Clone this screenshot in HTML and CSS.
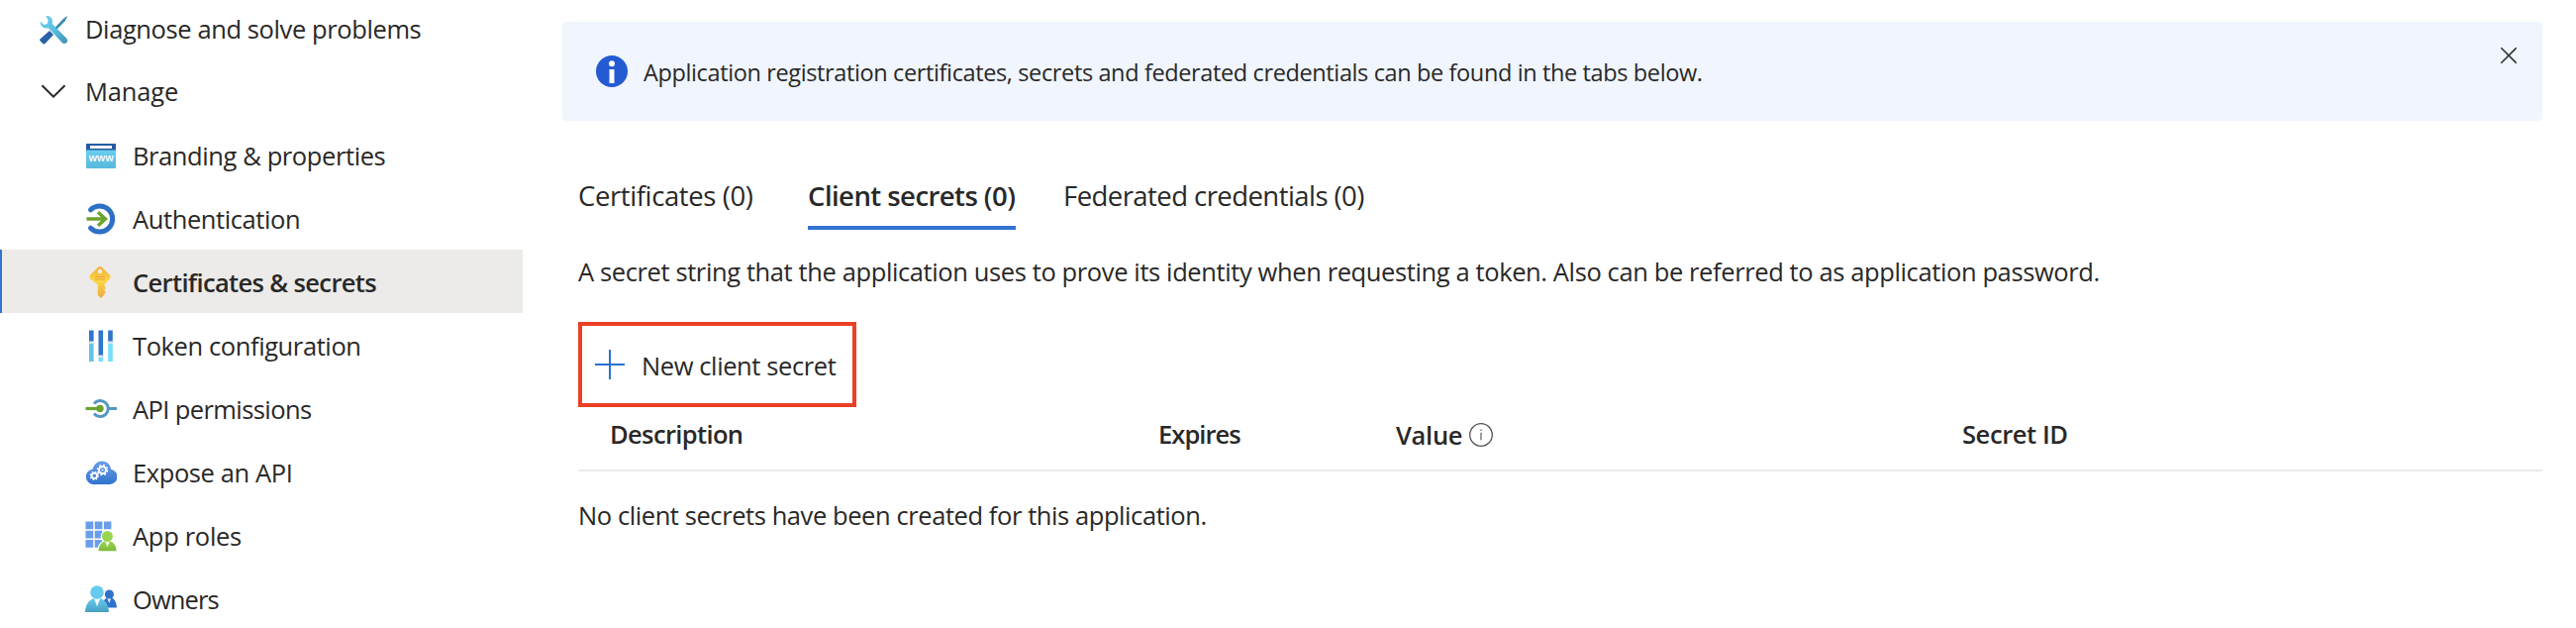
FILE: index.html
```html
<!DOCTYPE html>
<html lang="en">
<head>
<meta charset="utf-8">
<title>Certificates &amp; secrets</title>
<link rel="stylesheet" href="styles.css">
</head>
<body>
<div class="page">
  <nav class="sidebar">
    <a class="item item-top">
      <svg class="icon" viewBox="0 0 32 32">
        <defs>
          <linearGradient id="wrench" x1="0" y1="0" x2="1" y2="1"><stop offset="0" stop-color="#6fd0f2"/><stop offset=".5" stop-color="#5cbfe2"/><stop offset="1" stop-color="#4191b4"/></linearGradient>
        </defs>
        <path d="M29.600 2.200l.4.6-2.300 4.400-9.400 9.600-1.800-1.800 9.200-9.800z" fill="#3d87ad"/>
        <path d="M12 17l4 4-8.200 8.800a2 2 0 0 1-2.600.1l-2.600-2.600a1.500 1.500 0 0 1 .1-2z" fill="#2a62a8"/>
        <path d="M8.300 2.200c3.600-.7 7.200 2 6.600 6.200l-.1 1.600L29.300 24.800c1.300 1.500 1 3.500-.1 4.500-1.300 1.200-3.200 1-4.300-.1L10.800 14.200c-4.500 1.300-8.400-1.800-8.300-6.600l3.900 3.300 3.300-1 1-3.700z" fill="url(#wrench)"/>
      </svg>
      <span class="label diagnose">Diagnose and solve problems</span>
    </a>
    <a class="item item-group">
      <svg class="icon" viewBox="0 0 32 32"><path d="M4.500 10.200L16 21.600 27.500 10.200" fill="none" stroke="#292827" stroke-width="2"/></svg>
      <span class="label manage">Manage</span>
    </a>
    <a class="item sub">
      <svg class="icon" viewBox="0 0 32 32">
        <defs><linearGradient id="site" x1="0" y1="0" x2="0" y2="1"><stop offset="0" stop-color="#6fd5f6"/><stop offset="1" stop-color="#58b9dc"/></linearGradient></defs>
        <rect x="1" y="4" width="30" height="25" rx="1" fill="url(#site)"/>
        <path d="M1 10.500V5a1 1 0 0 1 1-1h28a1 1 0 0 1 1 1v5.500z" fill="#245ba3"/>
        <rect x="5" y="6" width="22" height="3" fill="#f2f2f2"/>
        <text class="www" x="16" y="22" text-anchor="middle">www</text>
      </svg>
      <span class="label">Branding &amp; properties</span>
    </a>
    <a class="item sub">
      <svg class="icon" viewBox="0 0 32 32">
        <path d="M5.500 6.800A13 13 0 1 1 5.500 25.200" fill="none" stroke="#2d70c4" stroke-width="5" stroke-linecap="round"/>
        <path d="M1.500 16H20M13 9.300L20.500 16l-7.500 6.700" fill="none" stroke="#6ba32f" stroke-width="3.400"/>
      </svg>
      <span class="label">Authentication</span>
    </a>
    <a class="item sub selected">
      <svg class="icon" viewBox="0 0 32 32">
        <defs><linearGradient id="key" x1="0" y1="0" x2="0" y2="1"><stop offset="0" stop-color="#f2b03c"/><stop offset=".45" stop-color="#fbd548"/><stop offset="1" stop-color="#efa93b"/></linearGradient></defs>
        <path d="M12.800 1q2.200-2 4.400 0l7.600 7.600q1.600 2 0 4L19.500 18v2l1 1v1.500l-1.300 1.300 1.300 1.300v1.400l-1.300 1.200v1l-3.200 3.300-3.200-3V18.500L5.200 12.600q-1.600-2 0-4z" fill="url(#key)"/>
        <circle cx="15" cy="4.900" r="2.200" fill="#f0eeea"/>
        <path d="M10 10.500h10M10 13h10" stroke="#eaa23a" stroke-width="1.200"/>
      </svg>
      <span class="label">Certificates &amp; secrets</span>
    </a>
    <a class="item sub">
      <svg class="icon" viewBox="0 0 32 32">
        <path d="M4 .5h4.600V12H4zM13.500.5h4.600V26h-4.600zM23.200.5h4.600V12h-4.600z" fill="#2f74cf"/>
        <path d="M4 13.500h4.600V32H4z" fill="#65c3e0"/><path d="M13.500 27.500h4.600V32h-4.600zM23.200 13.500h4.600V32h-4.600z" fill="#76def9"/>
        <path d="M3.200 11.500h6.200v2H3.200zM12.700 25.500h6.200v2h-6.200zM22.400 11.500h6.200v2h-6.200z" fill="#dfe3e8"/>
      </svg>
      <span class="label">Token configuration</span>
    </a>
    <a class="item sub">
      <svg class="icon" viewBox="0 0 32 32">
        <path d="M9 10.500A8 8 0 1 1 9 20.500M23 15.500h9" fill="none" stroke="#5597c4" stroke-width="3"/>
        <path d="M.5 15.500H15" stroke="#6ba32f" stroke-width="3.200"/><circle cx="15" cy="15.500" r="3.700" fill="#6ba32f"/>
      </svg>
      <span class="label permissions">API permissions</span>
    </a>
    <a class="item sub">
      <svg class="icon" viewBox="0 0 32 32">
        <defs><linearGradient id="cloud" x1="0" y1="0" x2="0" y2="1"><stop offset="0" stop-color="#6a9fe8"/><stop offset="1" stop-color="#3273cf"/></linearGradient></defs>
        <path d="M7.800 28A7.700 7.700 0 0 1 7.500 12.700C9 7.600 12.800 4.500 17 4.500c5 0 8.600 3.600 9 8.200A7.700 7.700 0 0 1 25 28z" fill="url(#cloud)"/>
        <g fill="none" stroke="#fff"><circle cx="17.500" cy="13.500" r="3.500" stroke-width="2"/><circle cx="17.500" cy="13.500" r="5" stroke-width="1.600" stroke-dasharray="1.960 1.960"/><circle cx="9.300" cy="19.300" r="2.700" stroke-width="1.800"/><circle cx="9.300" cy="19.300" r="4" stroke-width="1.400" stroke-dasharray="1.570 1.570"/></g>
        <circle cx="17.500" cy="13.500" r="1" fill="#fff"/>
      </svg>
      <span class="label">Expose an API</span>
    </a>
    <a class="item sub">
      <svg class="icon" viewBox="0 0 32 32">
        <defs><linearGradient id="role" x1="0" y1="0" x2="0" y2="1"><stop offset="0" stop-color="#9bd84e"/><stop offset="1" stop-color="#7fb83c"/></linearGradient></defs>
        <path d="M.5 1.500h7.700v7.700H.5zM9.700 1.500h7.700v7.700H9.700zM18.900 1.500h7.500v7.700h-7.500zM.5 10.700h7.700v7.700H.5zM9.700 10.700h7.700v7.700H9.700zM.5 20h7.700v7.700H.5zM9.700 20h7.700v7.700H9.700z" fill="#6a9dea"/>
        <path d="M12.200 32c.2-5 1.800-9 5.200-10.600a6.800 6.800 0 1 1 10 0C30.500 23 32 27 32 32z" fill="#fff"/>
        <path d="M13.500 31.200c.3-5.500 3-10.200 9-10.200s8.800 4.700 9.200 10.200z" fill="url(#role)"/>
        <path d="M19.800 20.800l2.700 6.700 2.700-6.700z" fill="#f1f5e8"/><circle cx="22.400" cy="16.400" r="5.500" fill="#99d64f"/>
      </svg>
      <span class="label roles">App roles</span>
    </a>
    <a class="item sub">
      <svg class="icon" viewBox="0 0 32 32">
        <defs><linearGradient id="owner" x1="0" y1="0" x2="0" y2="1"><stop offset="0" stop-color="#68cdef"/><stop offset="1" stop-color="#479fc2"/></linearGradient></defs>
        <path d="M17 24.500c.4-6 2.800-10.500 7.500-10.500s7 4.500 7.500 10.500z" fill="#2f72cc"/><path d="M22 14l2.300 6 2.300-6z" fill="#e6f0fa"/><circle cx="24.400" cy="11" r="4.600" fill="#2f72cc"/>
        <path d="M0 29c.3-8 4.300-14.200 12-14.200S23.500 21 24 29z" fill="url(#owner)"/><path d="M8.600 14l3.500 9.500L15.600 14z" fill="#eef8fc"/><circle cx="12" cy="9" r="6.800" fill="#66cbed"/>
      </svg>
      <span class="label owners">Owners</span>
    </a>
  </nav>
  <main class="content">
    <section class="banner">
      <svg class="banner-icon" viewBox="0 0 32 32"><circle cx="16" cy="16" r="16" fill="#245bd2"/><circle cx="16" cy="8.200" r="3" fill="#fff"/><path d="M13.500 14h5v14h-5z" fill="#fff"/></svg>
      <span>Application registration certificates, secrets and federated credentials can be found in the tabs below.</span>
      <svg class="close" viewBox="0 0 18 18"><path d="M1.300 1.300l15.400 15.400M16.700 1.300L1.300 16.700" stroke="#323130" stroke-width="1.600"/></svg>
    </section>
    <div class="tabs">
      <a class="tab certs">Certificates (0)</a>
      <a class="tab active">Client secrets (0)</a>
      <a class="tab federated">Federated credentials (0)</a>
    </div>
    <p class="intro">A secret string that the application uses to prove its identity when requesting a token. Also can be referred to as application password.</p>
    <button class="new">
      <svg class="plus" viewBox="0 0 30 30"><path d="M15 0v30M0 15h30" stroke="#2b72cf" stroke-width="2"/></svg>
      <span class="new-label">New client secret</span>
    </button>
    <div class="head">
      <span class="description">Description</span>
      <span class="expires">Expires</span>
      <span class="value">Value<svg class="info" viewBox="0 0 24 24"><circle cx="12" cy="12" r="11.300" fill="none" stroke="#555" stroke-width="1.300"/><path d="M12 9.800v7.400M12 6.500v1.600" stroke="#6a6a6a" stroke-width="1.300"/></svg></span>
      <span>Secret ID</span>
    </div>
    <p class="empty">No client secrets have been created for this application.</p>
  </main>
</div>
</body>
</html>
```
FILE: styles.css
```css
* { box-sizing: border-box; }
body {
  margin: 0;
  background: #fff;
  color: #292827;
  font-family: "Open Sans", "Noto Sans", sans-serif;
  font-size: 25.5px;
  letter-spacing: -0.4px;
  white-space: nowrap;
  overflow: hidden;
}
.page { display: flex; width: 2602px; height: 634px; overflow: hidden; }

.sidebar { width: 528px; flex: none; }
.item { display: flex; align-items: center; height: 64px; line-height: 60px; padding: 2px 0 0 38px; gap: 16px; }
.item-top { height: 60px; padding-top: 0; }
.item-group { padding-top: 0; }
.sub { padding-left: 86px; }
.icon { width: 32px; height: 32px; flex: none; }
.www { fill: #fff; font-size: 10.5px; font-weight: 600; letter-spacing: -0.2px; }
.selected { background: #ecebe9; box-shadow: inset 2px 0 #3374d0; font-weight: 600; letter-spacing: -0.64px; }
.diagnose { margin-top: -2px; }
.manage { letter-spacing: -0.16px; }
.permissions { letter-spacing: -0.6px; }
.roles { letter-spacing: -0.3px; }
.owners { letter-spacing: -0.9px; }

.content { flex: none; width: 2000px; margin-left: 40px; padding-top: 22px; }
.banner { display: flex; height: 100px; padding: 34px 25px 0 34px; border-radius: 4px; background: #f0f5fe; font-size: 23.5px; line-height: 34px; letter-spacing: -0.375px; }
.banner-icon { width: 32px; height: 32px; margin-right: 16px; flex: none; }
.close { width: 18px; height: 18px; margin: -9px 0 0 auto; flex: none; }
.tabs { display: flex; height: 110px; padding: 58px 0 0 16px; font-size: 27.5px; }
.tab { height: 52px; line-height: 35px; }
.certs { width: 176px; margin-right: 56px; }
.active { width: 210px; border-bottom: 4px solid #3374d0; font-weight: 600; letter-spacing: -0.55px; }
.federated { margin-left: 48px; letter-spacing: -0.56px; }
.intro { margin: 24px 0 0 16px; height: 69px; line-height: 36px; letter-spacing: -0.388px; }
.new { display: flex; align-items: center; width: 281px; height: 86px; margin-left: 16px; padding: 0 0 0 13px; gap: 17px; border: 4px solid #eb4025; background: none; color: inherit; font: inherit; letter-spacing: inherit; }
.plus { width: 30px; height: 30px; flex: none; }
.new-label { padding-top: 2px; }
.head { display: grid; grid-template-columns: 554px 240px 572px auto; height: 65px; margin-left: 16px; padding: 9px 0 0 32px; line-height: 36px; border-bottom: 2px solid #ebebeb; font-weight: 600; }
.description { letter-spacing: -0.64px; }
.expires { letter-spacing: -0.95px; }
.value { display: flex; align-items: flex-start; gap: 7px; padding-top: 1px; letter-spacing: -0.3px; }
.info { width: 24px; height: 24px; margin-top: 6px; }
.empty { margin: 26px 0 0 16px; line-height: 36px; letter-spacing: -0.42px; }
```
